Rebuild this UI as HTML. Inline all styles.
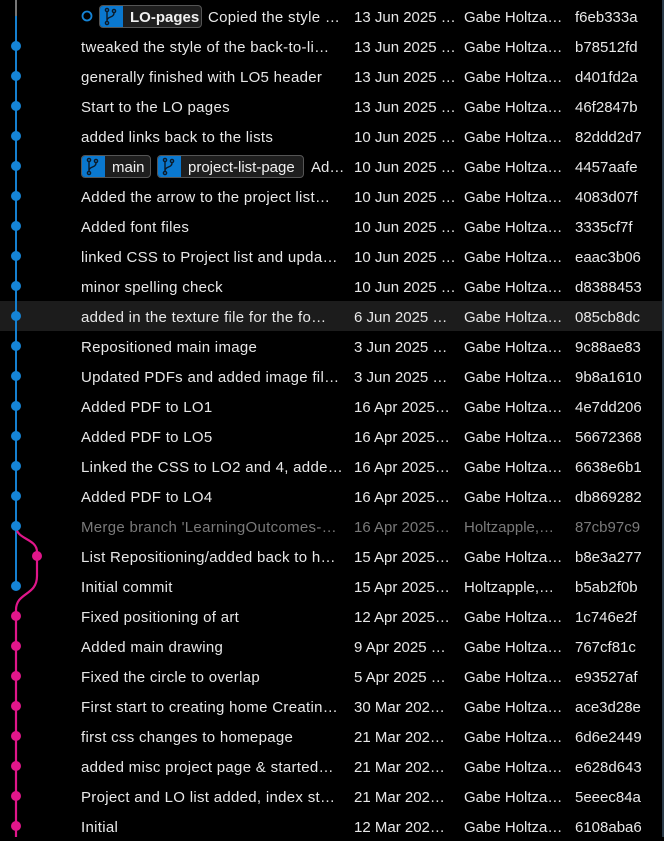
<!DOCTYPE html>
<html><head><meta charset="utf-8"><style>
body{margin:0;width:664px;height:837px;background:#000;overflow:hidden;position:relative;font-family:"Liberation Sans",sans-serif;font-size:15px;color:#e8e8e8}
.r{position:absolute;left:0;width:662px;height:30px}
.r span{position:absolute;top:8px;white-space:nowrap}
.m{left:81px;letter-spacing:0.3px}.d{left:354px}.a{left:464px}.h{left:575px}
.g{color:#7a7a7a}
.hl{background:#1c1c1c}
.b{position:absolute;top:4px;height:23px;border:1px solid #555;border-radius:4px;background:#1e1e1e;box-sizing:border-box;overflow:hidden}
.b i{position:absolute;left:0;top:0;bottom:0;width:23px;background:#0a78cf}
.b em{position:absolute;left:30px;top:3px;font-style:normal;color:#f0f0f0;white-space:nowrap}
</style></head><body>
<div class="r hl" style="top:301px"></div>
<svg width="100" height="837" style="position:absolute;left:0;top:0;z-index:2">
<line x1="16" y1="0" x2="16" y2="16" stroke="#777" stroke-width="2"/>
<line x1="16" y1="16" x2="16" y2="586" stroke="#1580d0" stroke-width="2"/>
<path d="M16 526 C16 540,37 538,37 552 L37 576 C37 596,16 592,16 610 L16 837" stroke="#e0168a" stroke-width="2.2" fill="none"/>
<g fill="#1584d6">
<circle cx="16" cy="46" r="5"/><circle cx="16" cy="76" r="5"/><circle cx="16" cy="106" r="5"/><circle cx="16" cy="136" r="5"/><circle cx="16" cy="166" r="5"/><circle cx="16" cy="196" r="5"/><circle cx="16" cy="226" r="5"/><circle cx="16" cy="256" r="5"/><circle cx="16" cy="286" r="5"/><circle cx="16" cy="316" r="5"/><circle cx="16" cy="346" r="5"/><circle cx="16" cy="376" r="5"/><circle cx="16" cy="406" r="5"/><circle cx="16" cy="436" r="5"/><circle cx="16" cy="466" r="5"/><circle cx="16" cy="496" r="5"/><circle cx="16" cy="526" r="5"/><circle cx="16" cy="586" r="5"/>
</g>
<g fill="#e0168a">
<circle cx="37" cy="556" r="5"/><circle cx="16" cy="616" r="5"/><circle cx="16" cy="646" r="5"/><circle cx="16" cy="676" r="5"/><circle cx="16" cy="706" r="5"/><circle cx="16" cy="736" r="5"/><circle cx="16" cy="766" r="5"/><circle cx="16" cy="796" r="5"/><circle cx="16" cy="826" r="5"/>
</g>
<circle cx="87" cy="16" r="4.5" fill="none" stroke="#1584d6" stroke-width="1.8"/>
</svg>
<div style="position:absolute;left:662px;top:0;width:2px;height:837px;background:#2a3a48"></div>

<div class="r" style="top:1px"><div class="b" style="left:99px;width:103px"><i></i><em style="font-weight:bold">LO-pages</em></div><span style="left:208px;letter-spacing:0.3px">Copied the style …</span><span class="d">13 Jun 2025 …</span><span class="a">Gabe Holtza…</span><span class="h">f6eb333a</span></div>
<div class="r" style="top:31px"><span class="m">tweaked the style of the back-to-li…</span><span class="d">13 Jun 2025 …</span><span class="a">Gabe Holtza…</span><span class="h">b78512fd</span></div>
<div class="r" style="top:61px"><span class="m">generally finished with LO5 header</span><span class="d">13 Jun 2025 …</span><span class="a">Gabe Holtza…</span><span class="h">d401fd2a</span></div>
<div class="r" style="top:91px"><span class="m">Start to the LO pages</span><span class="d">13 Jun 2025 …</span><span class="a">Gabe Holtza…</span><span class="h">46f2847b</span></div>
<div class="r" style="top:121px"><span class="m">added links back to the lists</span><span class="d">10 Jun 2025 …</span><span class="a">Gabe Holtza…</span><span class="h">82ddd2d7</span></div>
<div class="r" style="top:151px"><div class="b" style="left:81px;width:70px"><i></i><em>main</em></div><div class="b" style="left:157px;width:147px"><i></i><em>project-list-page</em></div><span style="left:311px">Ad…</span><span class="d">10 Jun 2025 …</span><span class="a">Gabe Holtza…</span><span class="h">4457aafe</span></div>
<div class="r" style="top:181px"><span class="m">Added the arrow to the project list…</span><span class="d">10 Jun 2025 …</span><span class="a">Gabe Holtza…</span><span class="h">4083d07f</span></div>
<div class="r" style="top:211px"><span class="m">Added font files</span><span class="d">10 Jun 2025 …</span><span class="a">Gabe Holtza…</span><span class="h">3335cf7f</span></div>
<div class="r" style="top:241px"><span class="m">linked CSS to Project list and upda…</span><span class="d">10 Jun 2025 …</span><span class="a">Gabe Holtza…</span><span class="h">eaac3b06</span></div>
<div class="r" style="top:271px"><span class="m">minor spelling check</span><span class="d">10 Jun 2025 …</span><span class="a">Gabe Holtza…</span><span class="h">d8388453</span></div>
<div class="r" style="top:301px"><span class="m">added in the texture file for the fo…</span><span class="d">6 Jun 2025 …</span><span class="a">Gabe Holtza…</span><span class="h">085cb8dc</span></div>
<div class="r" style="top:331px"><span class="m">Repositioned main image</span><span class="d">3 Jun 2025 …</span><span class="a">Gabe Holtza…</span><span class="h">9c88ae83</span></div>
<div class="r" style="top:361px"><span class="m">Updated PDFs and added image fil…</span><span class="d">3 Jun 2025 …</span><span class="a">Gabe Holtza…</span><span class="h">9b8a1610</span></div>
<div class="r" style="top:391px"><span class="m">Added PDF to LO1</span><span class="d">16 Apr 2025…</span><span class="a">Gabe Holtza…</span><span class="h">4e7dd206</span></div>
<div class="r" style="top:421px"><span class="m">Added PDF to LO5</span><span class="d">16 Apr 2025…</span><span class="a">Gabe Holtza…</span><span class="h">56672368</span></div>
<div class="r" style="top:451px"><span class="m">Linked the CSS to LO2 and 4, adde…</span><span class="d">16 Apr 2025…</span><span class="a">Gabe Holtza…</span><span class="h">6638e6b1</span></div>
<div class="r" style="top:481px"><span class="m">Added PDF to LO4</span><span class="d">16 Apr 2025…</span><span class="a">Gabe Holtza…</span><span class="h">db869282</span></div>
<div class="r g" style="top:511px"><span class="m">Merge branch 'LearningOutcomes-…</span><span class="d">16 Apr 2025…</span><span class="a">Holtzapple,…</span><span class="h">87cb97c9</span></div>
<div class="r" style="top:541px"><span class="m">List Repositioning/added back to h…</span><span class="d">15 Apr 2025…</span><span class="a">Gabe Holtza…</span><span class="h">b8e3a277</span></div>
<div class="r" style="top:571px"><span class="m">Initial commit</span><span class="d">15 Apr 2025…</span><span class="a">Holtzapple,…</span><span class="h">b5ab2f0b</span></div>
<div class="r" style="top:601px"><span class="m">Fixed positioning of art</span><span class="d">12 Apr 2025…</span><span class="a">Gabe Holtza…</span><span class="h">1c746e2f</span></div>
<div class="r" style="top:631px"><span class="m">Added main drawing</span><span class="d">9 Apr 2025 …</span><span class="a">Gabe Holtza…</span><span class="h">767cf81c</span></div>
<div class="r" style="top:661px"><span class="m">Fixed the circle to overlap</span><span class="d">5 Apr 2025 …</span><span class="a">Gabe Holtza…</span><span class="h">e93527af</span></div>
<div class="r" style="top:691px"><span class="m">First start to creating home Creatin…</span><span class="d">30 Mar 202…</span><span class="a">Gabe Holtza…</span><span class="h">ace3d28e</span></div>
<div class="r" style="top:721px"><span class="m">first css changes to homepage</span><span class="d">21 Mar 202…</span><span class="a">Gabe Holtza…</span><span class="h">6d6e2449</span></div>
<div class="r" style="top:751px"><span class="m">added misc project page &amp; started…</span><span class="d">21 Mar 202…</span><span class="a">Gabe Holtza…</span><span class="h">e628d643</span></div>
<div class="r" style="top:781px"><span class="m">Project and LO list added, index st…</span><span class="d">21 Mar 202…</span><span class="a">Gabe Holtza…</span><span class="h">5eeec84a</span></div>
<div class="r" style="top:811px"><span class="m">Initial</span><span class="d">12 Mar 202…</span><span class="a">Gabe Holtza…</span><span class="h">6108aba6</span></div>

<svg width="320" height="30" style="position:absolute;left:0;top:1px">
<g stroke="#0b1a28" stroke-width="1.4" fill="none">
<circle cx="107" cy="9" r="1.6"/><circle cx="107" cy="22" r="1.6"/><circle cx="114" cy="10" r="1.6"/>
<path d="M107 11v9M114 12c0 5-7 3-7 8"/>
</g>
</svg>
<svg width="320" height="30" style="position:absolute;left:0;top:151px">
<g stroke="#0b1a28" stroke-width="1.4" fill="none">
<circle cx="89" cy="9" r="1.6"/><circle cx="89" cy="22" r="1.6"/><circle cx="96" cy="10" r="1.6"/>
<path d="M89 11v9M96 12c0 5-7 3-7 8"/>
<circle cx="165" cy="9" r="1.6"/><circle cx="165" cy="22" r="1.6"/><circle cx="172" cy="10" r="1.6"/>
<path d="M165 11v9M172 12c0 5-7 3-7 8"/>
</g>
</svg>
</body></html>
